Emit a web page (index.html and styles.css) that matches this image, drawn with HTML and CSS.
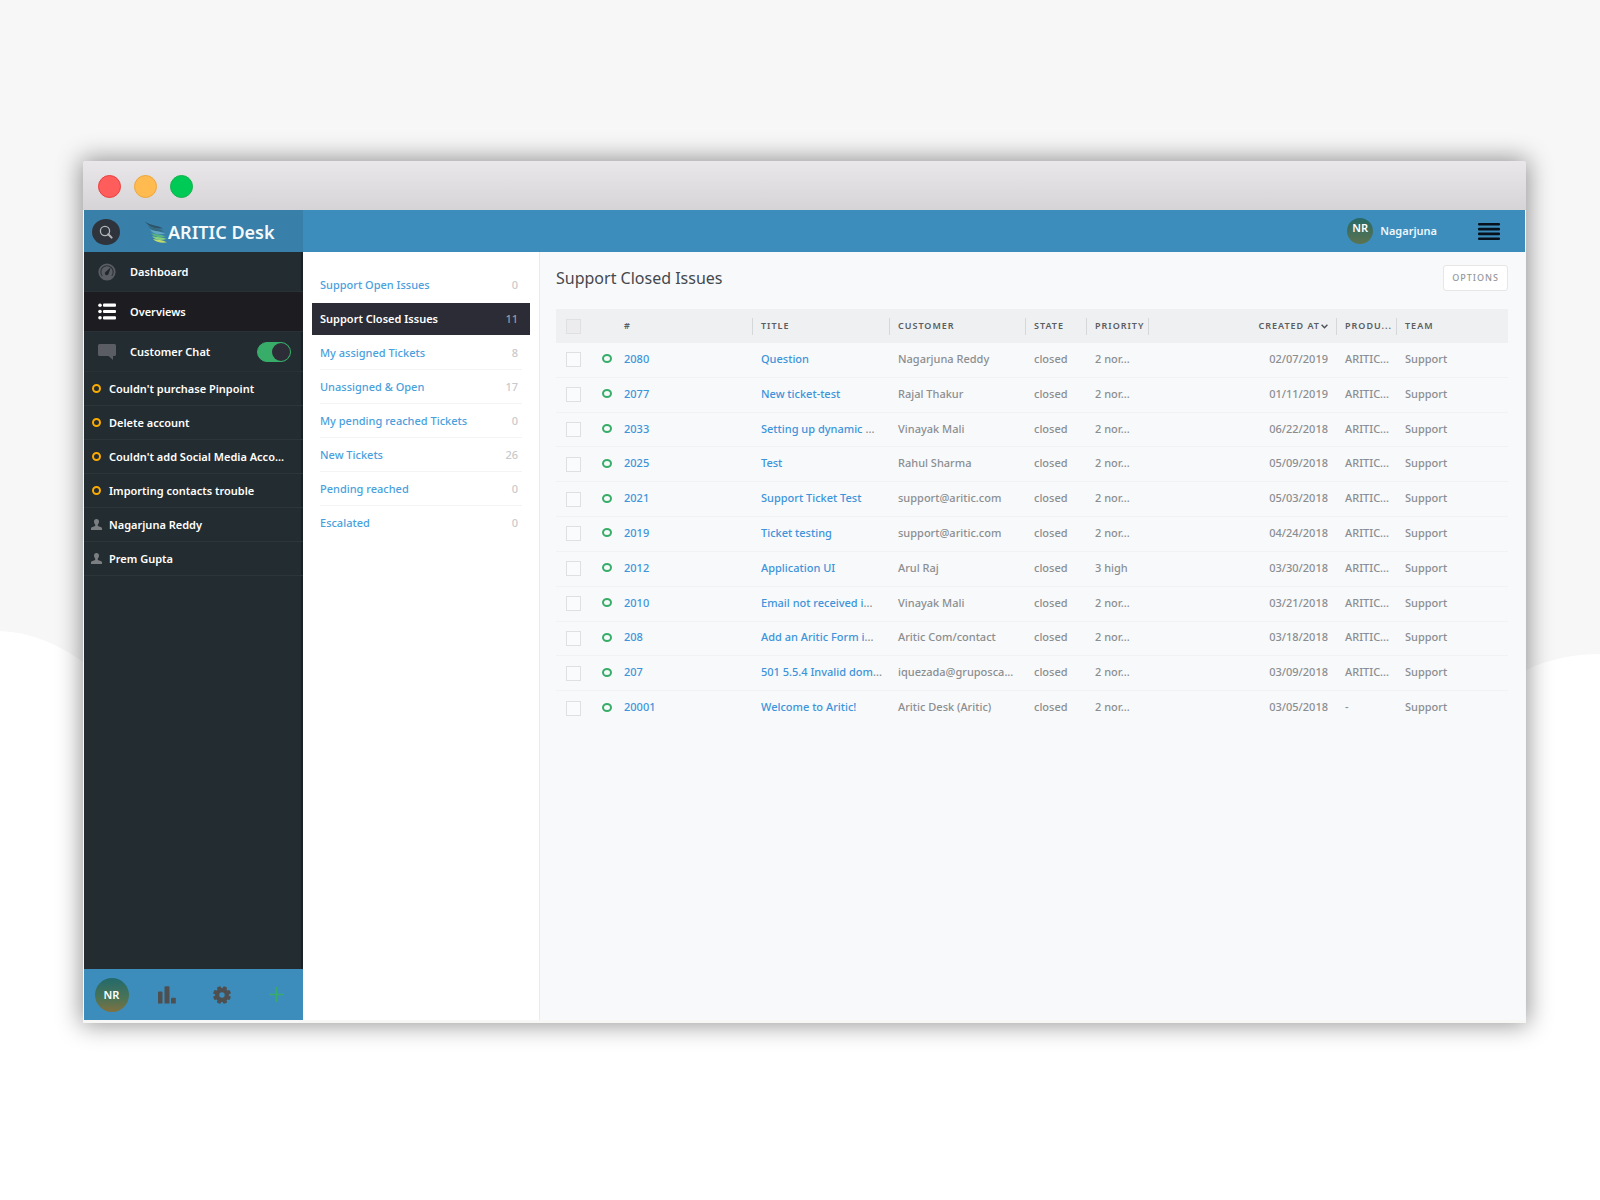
FILE: index.html
```html
<!DOCTYPE html>
<html lang="en">
<head>
<meta charset="utf-8">
<meta name="viewport" content="width=device-width, initial-scale=1">
<title>Support Closed Issues - Aritic Desk</title>
<link rel="stylesheet" href="styles.css">
</head>
<body>
<svg class="backdrop" viewBox="0 0 1600 1200" preserveAspectRatio="none" aria-hidden="true">
  <path fill="#fff" d="M0 631C30 632 60 644 90 667L400 900L1200 900L1500 686C1532 661 1570 654 1600 654V1200H0Z"/>
</svg>

<div class="window">
  <div class="titlebar">
    <span class="dot dot-close"></span>
    <span class="dot dot-min"></span>
    <span class="dot dot-max"></span>
  </div>

  <div class="app">
    <header class="topbar">
      <div class="brand">
        <button class="search" aria-label="Search">
          <svg width="14" height="14" viewBox="0 0 14 14" fill="none" stroke="#b4b6b9"><circle cx="6" cy="6" r="4.6" stroke-width="1.3"/><path d="M9.3 9.3L12.6 12.6" stroke-width="2" stroke-linecap="round"/></svg>
        </button>
        <a class="logo" href="#">
          <svg width="23" height="22" viewBox="0 0 23 22">
            <path fill="#2f5468" d="M0 .5C6 5 13 4 18 7.500C11 8 4 6.500 0 .5Z"/>
            <path fill="#356b80" d="M3 4.500C8 8 14 7 19.500 10.500C13 11 6 10.500 3 4.500Z"/>
            <path fill="#62a6c4" d="M5 8.500C10 10.500 15 10 20.500 12.800C14 13.800 8 13.500 5 8.500Z"/>
            <path fill="#58b283" d="M6 12C11 14 16 13 21 15.500C15 16.800 9 16.500 6 12Z"/>
            <path fill="#86cf7a" d="M7 15C12 16.800 17 15.500 21.500 18C16 19.500 10 19.500 7 15Z"/>
            <path fill="#c0dc6a" d="M8 18C12 19 17 18.200 22 21.500C16 22 11 21.500 8 18Z"/>
          </svg>
          <span>ARITIC Desk</span>
        </a>
      </div>
      <div class="account">
        <span class="avatar avatar-small">NR</span>
        <a class="account-name" href="#">Nagarjuna</a>
        <button class="burger" aria-label="Menu">
          <svg width="22" height="17" viewBox="0 0 22 17" fill="#06111c"><rect width="22" height="2.6" rx="1"/><rect y="4.8" width="22" height="2.6" rx="1"/><rect y="9.6" width="22" height="2.6" rx="1"/><rect y="14.4" width="22" height="2.6" rx="1"/></svg>
        </button>
      </div>
    </header>

    <nav class="sidebar">
      <ul class="menu">
        <li><a href="#">
          <svg class="menu-icon" width="18" height="18" viewBox="0 0 18 18"><circle cx="9" cy="9" r="8.6" fill="#5a5d64"/><path d="M4.3 13A6.2 6.2 0 1 1 13.7 13" fill="none" stroke="#2a3136" stroke-width="1.1"/><path d="M12.8 4.2L10.6 10.8A1.9 1.9 0 1 1 7.5 8.9Z" fill="#20282c"/></svg>
          Dashboard</a></li>
        <li class="active"><a href="#">
          <svg class="menu-icon" width="18" height="17" viewBox="0 0 18 17" fill="#fff"><circle cx="2" cy="2.2" r="1.8"/><circle cx="2" cy="8.5" r="1.8"/><circle cx="2" cy="14.8" r="1.8"/><rect x="5" y=".6" width="13" height="3.2" rx="1"/><rect x="5" y="6.9" width="13" height="3.2" rx="1"/><rect x="5" y="13.2" width="13" height="3.2" rx="1"/></svg>
          Overviews</a></li>
        <li><a href="#">
          <svg class="menu-icon" width="18" height="16" viewBox="0 0 18 16"><path fill="#5a5d64" d="M1.5 0H16.5Q18 0 18 1.5V10.500Q18 12 16.500 12H15V16L10.500 12H1.500Q0 12 0 10.500V1.500Q0 0 1.500 0Z"/></svg>
          Customer Chat</a>
          <input class="switch" type="checkbox" role="switch" aria-label="Customer Chat" checked></li>
      </ul>
      <ul class="tasks">
        <li><a href="#"><span class="ring"></span>Couldn't purchase Pinpoint</a></li>
        <li><a href="#"><span class="ring"></span>Delete account</a></li>
        <li><a href="#"><span class="ring"></span>Couldn't add Social Media Acco...</a></li>
        <li><a href="#"><span class="ring"></span>Importing contacts trouble</a></li>
        <li><a href="#"><svg class="person" width="11" height="11" viewBox="0 0 11 11"><path d="M5.500 0C7.200 0 8 1 8 2.600C8 4 7.400 5 6.800 5.600V7L10.200 8.200Q11 8.600 11 9.500V11H0V9.500Q0 8.600 .8 8.200L4.200 7V5.600C3.600 5 3 4 3 2.600C3 1 3.800 0 5.500 0Z"/></svg>Nagarjuna Reddy</a></li>
        <li><a href="#"><svg class="person" width="11" height="11" viewBox="0 0 11 11"><path d="M5.500 0C7.200 0 8 1 8 2.600C8 4 7.400 5 6.800 5.600V7L10.200 8.200Q11 8.600 11 9.500V11H0V9.500Q0 8.600 .8 8.200L4.200 7V5.600C3.600 5 3 4 3 2.600C3 1 3.800 0 5.500 0Z"/></svg>Prem Gupta</a></li>
      </ul>
      <div class="tools">
        <span class="avatar avatar-large">NR</span>
        <button aria-label="Statistics"><svg width="18" height="18" viewBox="0 0 18 18" fill="#504f50"><path d="M0 6.500Q0 5.500 1 5.500H3.500Q4.500 5.500 4.500 6.500V17.500H0Z"/><path d="M6.500 1Q6.500 .2 7.500 .2H10.500Q11.500 .2 11.500 1V17.500H6.500Z"/><path d="M13 12.500Q13 11.800 14 11.800H16.800Q17.800 11.800 17.800 12.500V17.500H13Z"/></svg></button>
        <button aria-label="Settings"><svg width="18" height="18" viewBox="0 0 18 18"><g fill="#504f50"><circle cx="9" cy="9" r="6.900"/><rect x="6.900" y="0" width="4.200" height="18" rx="1.400" transform="rotate(22.500 9 9)"/><rect x="6.900" y="0" width="4.200" height="18" rx="1.400" transform="rotate(67.500 9 9)"/><rect x="6.900" y="0" width="4.200" height="18" rx="1.400" transform="rotate(112.500 9 9)"/><rect x="6.900" y="0" width="4.200" height="18" rx="1.400" transform="rotate(157.500 9 9)"/></g><circle cx="9" cy="9" r="2.700" fill="#3c8dbc"/></svg></button>
        <button aria-label="New"><svg width="15" height="15" viewBox="0 0 15 15" stroke="#38ad69" stroke-width="1.600"><path d="M7.500 0V15M0 7.500H15"/></svg></button>
      </div>
    </nav>

    <nav class="overviews">
      <ul>
        <li><a href="#">Support Open Issues</a><span>0</span></li>
        <li class="active"><a href="#">Support Closed Issues</a><span>11</span></li>
        <li><a href="#">My assigned Tickets</a><span>8</span></li>
        <li><a href="#">Unassigned &amp; Open</a><span>17</span></li>
        <li><a href="#">My pending reached Tickets</a><span>0</span></li>
        <li><a href="#">New Tickets</a><span>26</span></li>
        <li><a href="#">Pending reached</a><span>0</span></li>
        <li><a href="#">Escalated</a><span>0</span></li>
      </ul>
    </nav>

    <main class="content">
      <div class="content-head">
        <h1>Support Closed Issues</h1>
        <button class="options">OPTIONS</button>
      </div>
      <table class="tickets">
        <colgroup>
          <col class="c-check"><col class="c-icon"><col class="c-wide"><col class="c-wide"><col class="c-customer"><col class="c-state"><col class="c-priority"><col><col class="c-product"><col class="c-team">
        </colgroup>
        <thead>
          <tr><th class="check"><input type="checkbox" aria-label="Select all"></th><th></th><th class="sep">#</th><th class="sep">TITLE</th><th class="sep">CUSTOMER</th><th class="sep">STATE</th><th class="sep">PRIORITY</th><th class="sep date">CREATED AT<svg width="7" height="5" viewBox="0 0 7 5" fill="none" stroke="#4d5054" stroke-width="1.400"><path d="M.6 .8L3.500 3.800L6.400 .8"/></svg></th><th class="sep">PRODU...</th><th>TEAM</th></tr>
        </thead>
        <tbody>
          <tr><td class="check"><input type="checkbox" aria-label="Select 2080"></td><td><span class="state-ring"></span></td><td><a href="#">2080</a></td><td><a href="#">Question</a></td><td>Nagarjuna Reddy</td><td>closed</td><td>2 nor...</td><td class="date">02/07/2019</td><td>ARITIC...</td><td>Support</td></tr>
          <tr><td class="check"><input type="checkbox" aria-label="Select 2077"></td><td><span class="state-ring"></span></td><td><a href="#">2077</a></td><td><a href="#">New ticket-test</a></td><td>Rajal Thakur</td><td>closed</td><td>2 nor...</td><td class="date">01/11/2019</td><td>ARITIC...</td><td>Support</td></tr>
          <tr><td class="check"><input type="checkbox" aria-label="Select 2033"></td><td><span class="state-ring"></span></td><td><a href="#">2033</a></td><td><a href="#">Setting up dynamic</a> ...</td><td>Vinayak Mali</td><td>closed</td><td>2 nor...</td><td class="date">06/22/2018</td><td>ARITIC...</td><td>Support</td></tr>
          <tr><td class="check"><input type="checkbox" aria-label="Select 2025"></td><td><span class="state-ring"></span></td><td><a href="#">2025</a></td><td><a href="#">Test</a></td><td>Rahul Sharma</td><td>closed</td><td>2 nor...</td><td class="date">05/09/2018</td><td>ARITIC...</td><td>Support</td></tr>
          <tr><td class="check"><input type="checkbox" aria-label="Select 2021"></td><td><span class="state-ring"></span></td><td><a href="#">2021</a></td><td><a href="#">Support Ticket Test</a></td><td>support@aritic.com</td><td>closed</td><td>2 nor...</td><td class="date">05/03/2018</td><td>ARITIC...</td><td>Support</td></tr>
          <tr><td class="check"><input type="checkbox" aria-label="Select 2019"></td><td><span class="state-ring"></span></td><td><a href="#">2019</a></td><td><a href="#">Ticket testing</a></td><td>support@aritic.com</td><td>closed</td><td>2 nor...</td><td class="date">04/24/2018</td><td>ARITIC...</td><td>Support</td></tr>
          <tr><td class="check"><input type="checkbox" aria-label="Select 2012"></td><td><span class="state-ring"></span></td><td><a href="#">2012</a></td><td><a href="#">Application UI</a></td><td>Arul Raj</td><td>closed</td><td>3 high</td><td class="date">03/30/2018</td><td>ARITIC...</td><td>Support</td></tr>
          <tr><td class="check"><input type="checkbox" aria-label="Select 2010"></td><td><span class="state-ring"></span></td><td><a href="#">2010</a></td><td><a href="#">Email not received i</a>...</td><td>Vinayak Mali</td><td>closed</td><td>2 nor...</td><td class="date">03/21/2018</td><td>ARITIC...</td><td>Support</td></tr>
          <tr><td class="check"><input type="checkbox" aria-label="Select 208"></td><td><span class="state-ring"></span></td><td><a href="#">208</a></td><td><a href="#">Add an Aritic Form i</a>...</td><td>Aritic Com/contact</td><td>closed</td><td>2 nor...</td><td class="date">03/18/2018</td><td>ARITIC...</td><td>Support</td></tr>
          <tr><td class="check"><input type="checkbox" aria-label="Select 207"></td><td><span class="state-ring"></span></td><td><a href="#">207</a></td><td><a href="#">501 5.5.4 Invalid dom</a>...</td><td>iquezada@gruposca...</td><td>closed</td><td>2 nor...</td><td class="date">03/09/2018</td><td>ARITIC...</td><td>Support</td></tr>
          <tr><td class="check"><input type="checkbox" aria-label="Select 20001"></td><td><span class="state-ring"></span></td><td><a href="#">20001</a></td><td><a href="#">Welcome to Aritic!</a></td><td>Aritic Desk (Aritic)</td><td>closed</td><td>2 nor...</td><td class="date">03/05/2018</td><td>-</td><td>Support</td></tr>
        </tbody>
      </table>
    </main>
  </div>
</div>
</body>
</html>
```
FILE: styles.css
```css
* { box-sizing: border-box; }

body {
  margin: 0;
  min-height: 100vh;
  padding: 161px 74px 0 83px;
  background: #f7f7f7;
  color: #8b8e91;
  font: 500 11px/16px "Noto Sans", "Open Sans", sans-serif;
}

ul { margin: 0; padding: 0; list-style: none; }
a { color: inherit; text-decoration: none; }
svg { display: block; flex: none; }
button {
  display: flex;
  align-items: center;
  justify-content: center;
  padding: 0;
  border: 0;
  background: none;
  font: inherit;
  cursor: pointer;
}

.backdrop {
  position: absolute;
  top: 0;
  left: 0;
  z-index: -1;
  width: 100%;
  height: 100%;
}

/* Window frame */
.window {
  border-radius: 3px 3px 0 0;
  background: #f7f7f6;
  box-shadow: 0 0 24px 2px rgba(0, 0, 0, .42);
}
.titlebar {
  display: flex;
  align-items: center;
  gap: 13px;
  height: 49px;
  padding: 2px 15px 0;
  border-radius: 3px 3px 0 0;
  background: linear-gradient(#e9e7e9, #d6d4d6);
}
.dot { width: 23px; height: 23px; border: 1px solid; border-radius: 50%; }
.dot-close { background: #ff5c5c; border-color: #e93f40; }
.dot-min { background: #ffbb50; border-color: #eba73e; }
.dot-max { background: #00ca56; border-color: #14b14c; }

.app {
  display: grid;
  grid-template: 42px minmax(768px, auto) / 219px 237px minmax(0, 1fr);
  margin: 0 1px;
  padding-bottom: 3px;
}

/* Top bar */
.topbar {
  grid-column: 1 / -1;
  display: flex;
  justify-content: space-between;
  background: #3c8dbc;
}
.brand {
  display: flex;
  align-items: center;
  gap: 25px;
  width: 219px;
  padding: 2px 0 0 8px;
  background: #387fa9;
}
.search {
  width: 28px;
  height: 26px;
  border-radius: 50%;
  background: #2f343c;
}
.logo {
  display: flex;
  align-items: center;
  color: #f4f9fc;
  font-size: 18px;
  font-weight: 600;
  line-height: 24px;
}
.account { display: flex; align-items: center; padding-right: 25px; }
.account-name { margin: 0 41px 0 7px; color: #eef6fb; font-weight: 600; }
.avatar {
  display: flex;
  justify-content: center;
  border-radius: 50%;
  background: linear-gradient(#226a6c, #4c7356 60%, #80703f);
  color: #fff;
  font-weight: 600;
}
.avatar-small { width: 26px; height: 26px; padding-top: 2px; background: linear-gradient(#266a67, #5c7350); }
.avatar-large { width: 34px; height: 34px; align-items: center; }

/* Sidebar */
.sidebar {
  display: flex;
  flex-direction: column;
  background: #232c31;
  box-shadow: inset -2px 0 #1a2126;
  color: #fff;
  font-weight: 600;
}
.menu li {
  display: flex;
  align-items: center;
  height: 40px;
  padding: 0 12px 0 14px;
  border-bottom: 1px solid #2a3136;
}
.menu a { display: flex; flex: 1; align-items: center; gap: 14px; }
.menu .active { background: #1d1d21; }
.switch {
  appearance: none;
  display: flex;
  justify-content: flex-end;
  width: 34px;
  height: 20px;
  margin: 0;
  border: 1px solid #38ad69;
  border-radius: 10px;
  background: #38ad69;
}
.switch::before { content: ""; width: 18px; height: 18px; border-radius: 50%; background: #2c2d36; }
.tasks li { border-bottom: 1px solid #2d353a; }
.tasks a { display: flex; align-items: center; height: 33px; padding-left: 8px; white-space: nowrap; }
.ring { width: 9px; height: 9px; margin-right: 8px; border: 2px solid #faab00; border-radius: 50%; }
.person { margin: 0 7px 0 -1px; fill: #7c7f82; }
.tools {
  display: grid;
  grid-template-columns: repeat(4, 55px);
  align-items: center;
  justify-items: center;
  height: 51px;
  margin-top: auto;
  overflow: hidden;
  background: #3c8dbc;
}

/* Overview list */
.overviews {
  padding: 16px 9px;
  border-right: 1px solid #e9eaec;
  background: #fff;
}
.overviews li {
  display: flex;
  align-items: center;
  justify-content: space-between;
  height: 34px;
  margin: 0 8px;
  padding-right: 4px;
  border-bottom: 1px solid #f3f4f5;
  color: #c8cacc;
}
.overviews a { color: #4a9fdd; }
.overviews li:first-child, .overviews li:last-child { border-color: #fff; }
.overviews .active {
  height: 33px;
  margin: 1px 0 0;
  padding: 0 12px 0 8px;
  border-color: #fff;
  background: #2b2c36;
  color: #9a9ba1;
}
.overviews .active a { color: #fff; font-weight: 600; }

/* Ticket table */
.content { padding: 13px 17px 0 16px; background: #f8f9fb; }
.content-head {
  display: flex;
  align-items: center;
  justify-content: space-between;
  margin-bottom: 18px;
}
h1 { margin: 0; color: #45484c; font-size: 16px; font-weight: 400; line-height: 26px; }
.options {
  height: 26px;
  padding: 0 8px;
  border: 1px solid #e6e6e7;
  border-radius: 3px;
  background: #fff;
  color: #95989b;
  font-size: 9px;
  letter-spacing: 1px;
}
.tickets {
  width: 100%;
  height: 417px;
  border-spacing: 0;
  table-layout: fixed;
}
.c-check { width: 38px; }
.c-icon { width: 22px; }
.c-wide { width: 137px; }
.c-customer { width: 136px; }
.c-state { width: 61px; }
.c-priority { width: 62px; }
.c-product { width: 60px; }
.c-team { width: 111px; }
.tickets th, .tickets td {
  padding: 0 0 0 8px;
  text-align: left;
  white-space: nowrap;
}
.tickets th {
  height: 34px;
  background: #eff0f2;
  color: #5a5d61;
  font-size: 9px;
  font-weight: 600;
  letter-spacing: 1px;
}
.tickets .sep {
  background: #eff0f2 linear-gradient(#d6d7d9, #d6d7d9) right center / 1px 17px no-repeat;
}
.tickets td { padding-bottom: 2px; border-bottom: 1px solid #f1f2f4; }
.tickets tr:last-child td { border-color: transparent; }
.tickets td a { color: #3d94da; }
.tickets .check { padding: 0 0 0 10px; }
.tickets .date { padding-right: 9px; text-align: right; }
.date svg { display: inline-block; margin-left: 1px; }
.check input {
  appearance: none;
  display: block;
  width: 15px;
  height: 15px;
  margin: 0;
  border: 1px solid #dfe0e1;
  background: #fafbfc;
}
th.check input { background: #ececee; }
.state-ring {
  display: block;
  width: 10px;
  height: 9px;
  border: 2px solid #38ad69;
  border-radius: 50%;
}
```
